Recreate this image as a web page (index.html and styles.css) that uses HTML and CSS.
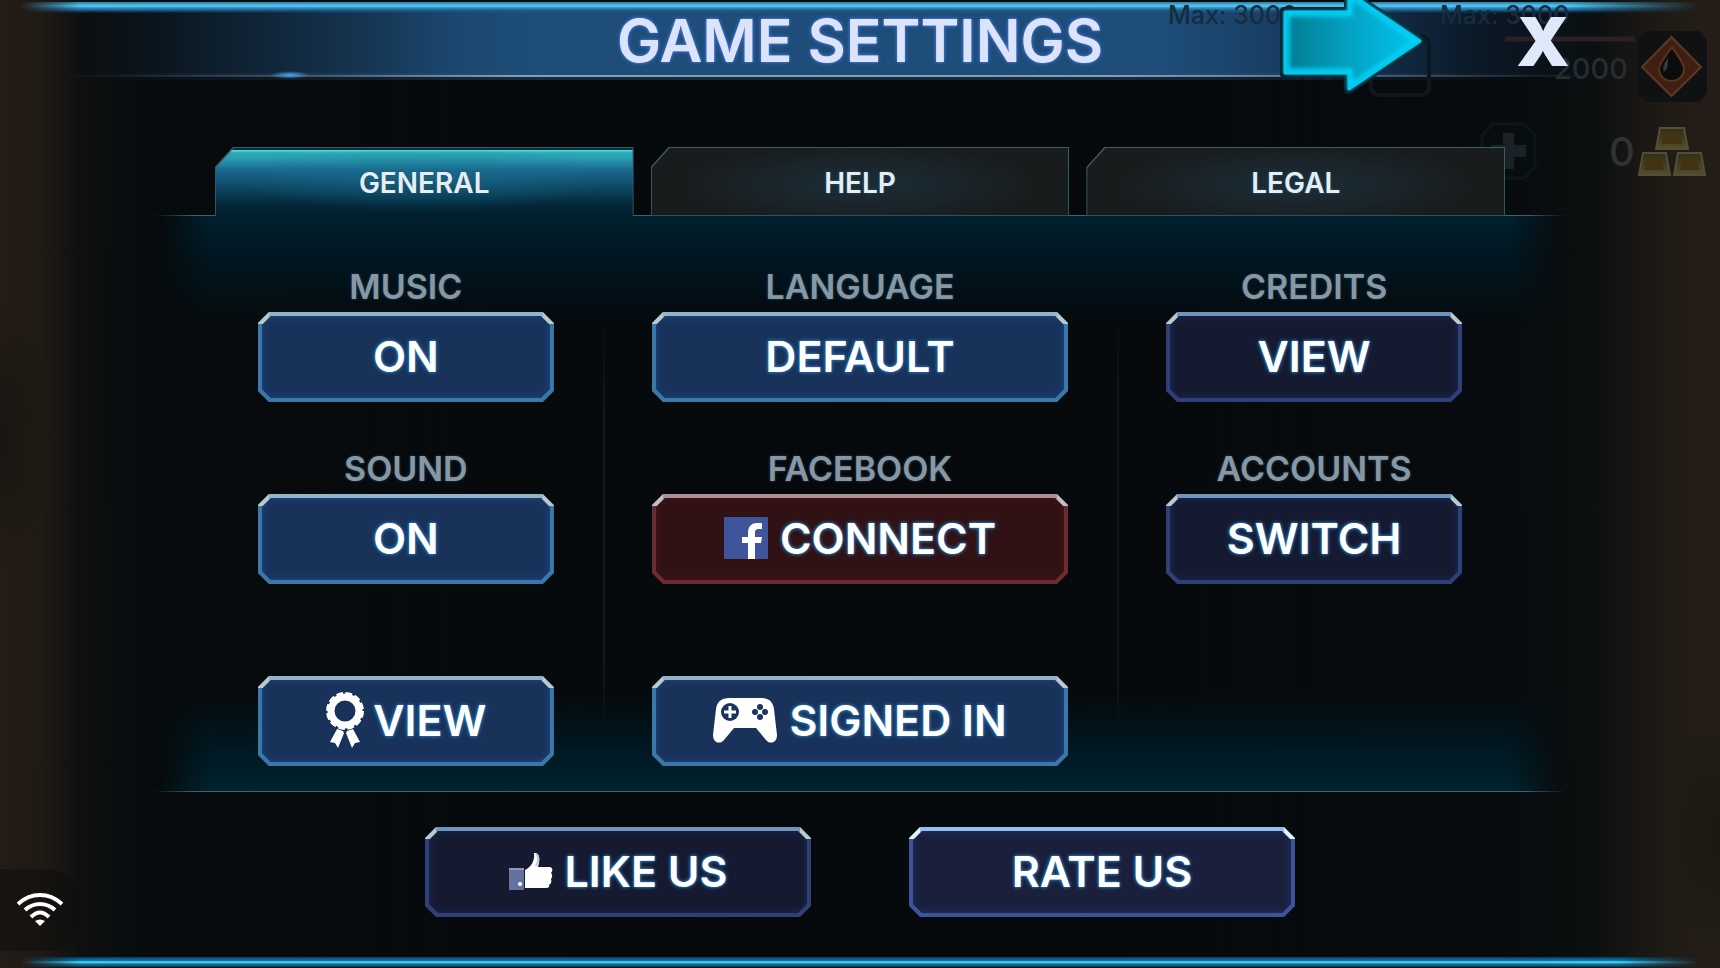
FILE: index.html
```html
<!DOCTYPE html>
<html lang="en">
<head>
  <meta charset="UTF-8" />
  <meta name="viewport" content="width=device-width, initial-scale=1.0"/>
  <title>Game Settings</title>
  <link rel="stylesheet" href="styles.css">
</head>
<body>

<!-- dimmed resource display behind the dialog -->
<svg class="hud" width="560" height="190" viewBox="0 0 560 190" aria-hidden="true">
  <defs>
    <linearGradient id="gold" x1="0" y1="0" x2="0" y2="1">
      <stop offset="0" stop-color="#322c16"/>
      <stop offset="1" stop-color="#564d2c"/>
    </linearGradient>
  </defs>
  <g fill="#172c3e" font-size="25" font-weight="500">
    <text x="8" y="24">Max: 3000</text>
    <text x="280" y="24">Max: 3000</text>
  </g>
  <path d="M345 39H475" stroke="#2b2027" stroke-width="5"/>
  <g fill="#252d34" font-size="29" font-weight="500">
    <text x="128" y="79">100</text>
    <text x="394" y="79">2000</text>
  </g>
  <rect x="211" y="36" width="58" height="59" rx="8" fill="none" stroke="#0c181e" stroke-width="4"/>
  <path d="M487 31H539L547 40V93L539 102H487L478 93V40Z" fill="#0f1113"/>
  <path d="M511.500 37L541 67L511.500 96L482 67Z" fill="#401e12" stroke="#5a3b1e" stroke-width="2"/>
  <path d="M512 47C518 56 524 63 524 69A12.500 12 0 0 1 499 69C499 63 506 56 512 47Z" fill="#0b0c0e" stroke="#54361c" stroke-width="2"/>
  <path d="M508 58C504 63 502 68 504 72C508 69 508 64 508 58Z" fill="#33393c"/>
  <path d="M333 124H364L375 135V167L364 178H333L322 167V135Z" fill="#080d0f" stroke="#0b1618" stroke-width="3"/>
  <path d="M343 133H354V145H366V157H354V169H343V157H331V145H343Z" fill="#1b2125"/>
  <text x="449" y="166" font-size="40" font-weight="500" fill="#303334">0</text>
  <g fill="url(#gold)" stroke="#514e3c" stroke-width="2">
    <path d="M500 128H524L528 149H496Z"/>
    <path d="M483 153H506L510 175H479Z"/>
    <path d="M518 153H541L545 175H514Z"/>
  </g>
  <g fill="#403412">
    <path d="M504 133H520L522 144H502Z"/>
    <path d="M486 158H502L504 170H484Z"/>
    <path d="M522 158H537L539 170H520Z"/>
  </g>
</svg>

<div class="dialog">
  <header class="header">
    <h1>GAME SETTINGS</h1>
    <svg class="arrow" width="146" height="100" viewBox="0 0 146 100" aria-hidden="true">
      <defs>
        <linearGradient id="arrowFill">
          <stop offset="0" stop-color="#027c92"/>
          <stop offset="0.500" stop-color="#04a3c4"/>
          <stop offset="1" stop-color="#02c5ee"/>
        </linearGradient>
        <filter id="soft"><feGaussianBlur stdDeviation="2"/></filter>
      </defs>
      <path d="M4 15H68V-4L142 45L68 94V78H4Z" fill="#04202d" stroke="#04202d" stroke-width="8" stroke-linejoin="round"/>
      <path d="M5 16H69V-3L140 45L69 93V77H5Z" fill="url(#arrowFill)"/>
      <path d="M7 18H70V-1L137 45L70 90V75H7Z" fill="none" stroke="#05d6fb" stroke-width="5" filter="url(#soft)"/>
      <path d="M5 16H69V-3L140 45L69 93V77H5Z" fill="none" stroke="#06c9f0" stroke-width="3" stroke-linejoin="round"/>
    </svg>
    <button class="close" aria-label="Close">X</button>
  </header>

  <main class="content">
    <nav class="tabs">
      <button class="tab active">GENERAL</button>
      <button class="tab">HELP</button>
      <button class="tab">LEGAL</button>
    </nav>

    <section class="panel">
      <div class="column">
        <div class="setting">
          <label for="music">MUSIC</label>
          <button class="btn" id="music">ON</button>
        </div>
        <div class="setting">
          <label for="sound">SOUND</label>
          <button class="btn" id="sound">ON</button>
        </div>
        <div class="setting">
          <button class="btn">
            <svg width="40" height="58" viewBox="0 0 40 58" aria-hidden="true">
              <circle cx="20" cy="20" r="14" fill="none" stroke="#fff" stroke-width="7"/>
              <circle cx="20" cy="20" r="17" fill="none" stroke="#fff" stroke-width="4" stroke-dasharray="6.400 2.500"/>
              <path d="M12 38L18 40L19 42L13 57L10 52L5 51ZM28 38L22 40L21 42L27 57L30 52L35 51Z" fill="#fff"/>
            </svg>
            VIEW
          </button>
        </div>
      </div>

      <div class="column">
        <div class="setting">
          <label for="language">LANGUAGE</label>
          <button class="btn" id="language">DEFAULT</button>
        </div>
        <div class="setting">
          <label for="facebook">FACEBOOK</label>
          <button class="btn red wide-gap" id="facebook">
            <svg width="44" height="42" viewBox="0 0 44 42" aria-hidden="true">
              <rect width="44" height="42" rx="1" fill="#3f559b"/>
              <path d="M24 42V26H18V20H24V16C24 9 28 6 33 6H38V12H35C32 12 31 13 31 16V20H38L37 26H31V42Z" fill="#fff"/>
            </svg>
            CONNECT
          </button>
        </div>
        <div class="setting">
          <button class="btn wide-gap">
            <svg width="64" height="46" viewBox="0 0 64 46" aria-hidden="true">
              <path d="M16 1H48C56 1 60 5 61 12L64 38C64 47 56 47 53 43L43 31H21L11 43C8 47 0 47 0 38L3 12C4 5 8 1 16 1Z" fill="#fff"/>
              <circle cx="17" cy="15" r="9" fill="#1a3560"/>
              <path d="M17 9V21M11 15H23" stroke="#fff" stroke-width="3"/>
              <g fill="#1a3560">
                <circle cx="47" cy="10" r="3"/>
                <circle cx="47" cy="20" r="3"/>
                <circle cx="42" cy="15" r="3"/>
                <circle cx="52" cy="15" r="3"/>
              </g>
            </svg>
            SIGNED IN
          </button>
        </div>
      </div>

      <div class="column">
        <div class="setting">
          <label for="credits">CREDITS</label>
          <button class="btn dark" id="credits">VIEW</button>
        </div>
        <div class="setting">
          <label for="accounts">ACCOUNTS</label>
          <button class="btn dark" id="accounts">SWITCH</button>
        </div>
      </div>
    </section>

    <div class="links">
      <button class="btn dark wide-gap">
        <svg width="44" height="38" viewBox="0 0 44 38" aria-hidden="true">
          <path d="M0 16H15V38H0Z" fill="#65719f"/>
          <path d="M0 16H15V18H0Z" fill="#8e99c0"/>
          <circle cx="11" cy="32" r="2" fill="#fff"/>
          <path d="M16 18C22 15 26 9 25 1C30 0 32 6 29 15H41C44 16 44 19 42 21C44 23 43 26 42 27C43 30 42 32 40 33C41 35 39 36 37 36H16Z" fill="#fff"/>
          <path d="M27 2C30 4 30 9 27 14" fill="none" stroke="#bdcbe0" stroke-width="2"/>
        </svg>
        LIKE US
      </button>
      <button class="btn dark bright">RATE US</button>
    </div>
  </main>
</div>

<div class="wifi">
  <svg width="46" height="36" viewBox="0 0 46 36" fill="none" stroke="#fff" stroke-width="4" role="img" aria-label="Wi-Fi">
    <path d="M1 12C14 0 32 0 45 12M8 18C17 10 29 10 38 18M14 25C20 19 26 19 32 25"/>
    <path d="M18 29Q23 26 28 29L23 34Z" fill="#fff" stroke="none"/>
  </svg>
</div>

</body>
</html>
```
FILE: styles.css
```css
* {
  margin: 0;
  padding: 0;
  box-sizing: border-box;
  font-family: Inter, "Liberation Sans", sans-serif;
}
body {
  min-height: 100vh;
  position: relative;
  overflow-x: hidden;
  background:
    radial-gradient(ellipse 50px 140px at 0 45%, rgba(20,18,14,0.7), transparent),
    radial-gradient(ellipse 60px 120px at 100% 86%, rgba(24,24,12,0.8), transparent),
    linear-gradient(90deg, #241c16, #201a14 40px, #0d0f10 84px, #070b0d 160px, #05090c 50%, #070b0d 1500px, #0b0f10 calc(100% - 130px), #211b16 calc(100% - 50px), #241d18 100%);
}
button {
  border: none;
  background: none;
  cursor: pointer;
}

.hud {
  position: absolute;
  top: 0;
  right: 0;
}

.dialog {
  min-height: 100vh;
  position: relative;
  display: flex;
  flex-direction: column;
}
/* glowing line along the bottom edge */
.dialog::after {
  content: "";
  height: 10px;
  margin: auto 20px 1px;
  background: linear-gradient(#073b58, #0a79a8 35%, #5fe3fb 50%, #0a79a8 70%, #073b58);
  -webkit-mask-image: linear-gradient(90deg, transparent, #000 60px, #000 calc(100% - 80px), transparent);
  mask-image: linear-gradient(90deg, transparent, #000 60px, #000 calc(100% - 80px), transparent);
}

/* header */
.header {
  position: relative;
  height: 79px;
  padding: 2px 150px 0;
  display: grid;
  grid-template-columns: 1fr auto 1fr;
  align-items: center;
}
.header::before {
  content: "";
  position: absolute;
  inset: 2px 20px -2px;
  z-index: -1;
  background:
    radial-gradient(ellipse 20px 4px at 270px 73px, #4aa8e8, transparent),
    linear-gradient(#1b7fb0 0, #64c8ea 4px, #2a8fc0 6px, #1d5f92 8px, transparent 11px) top / 100% 11px no-repeat,
    linear-gradient(90deg, transparent 40px, rgba(127,159,192,0.4) 300px, #7f9fc0 500px, #7f9fc0 65%, rgba(127,159,192,0.2) 88%, transparent 94%) 0 73px / 100% 2px no-repeat,
    linear-gradient(90deg, transparent 60px, rgba(50,75,105,0.5) 500px, rgba(50,75,105,0.5) 65%, transparent 90%) 0 71px / 100% 7px no-repeat,
    linear-gradient(90deg, transparent 60px, rgba(16,40,60,0.5) 160px, #163450 340px, #1b4870 440px, #1d4d78 520px, #1d4d78 68%, #163758 78%, rgba(16,38,62,0.6) 86%, transparent 94%) 0 8px / 100% 66px no-repeat;
  -webkit-mask-image: linear-gradient(90deg, transparent, #000 60px, #000 calc(100% - 130px), transparent);
  mask-image: linear-gradient(90deg, transparent, #000 60px, #000 calc(100% - 130px), transparent);
}
.header h1 {
  grid-column: 2;
  color: #dce4fb;
  font-size: 59px;
  font-weight: 600;
  line-height: 76px;
  text-shadow: 0 0 4px #4a78e0, 0 0 2px #4a78e0;
}
.arrow {
  position: absolute;
  top: -4px;
  right: 294px;
}
.close {
  justify-self: end;
  width: 54px;
  color: #dfe9fa;
  font-size: 68px;
  font-weight: 900;
  line-height: 74px;
}

/* tabs */
.content {
  width: 82%;
  margin: 68px auto 0;
}
.tabs {
  position: relative;
  z-index: 1;
  margin: 0 60px -1px;
  display: grid;
  grid-template-columns: repeat(3, 1fr);
  gap: 17px;
}
.tab {
  --cut: polygon(18px 0, 100% 0, 100% 100%, 0 100%, 0 20px);
  position: relative;
  height: 69px;
  padding-top: 3px;
  background: linear-gradient(#3c5d66, #2a5460);
  clip-path: var(--cut);
  color: #e3eff5;
  font-size: 28px;
  font-weight: 600;
  text-shadow: 0 0 3px #2d5364;
  z-index: 0;
}
.tab::before {
  content: "";
  position: absolute;
  inset: 1px;
  z-index: -1;
  clip-path: var(--cut);
  background: radial-gradient(ellipse 42% 60% at 50% 55%, #1a2d38, #1a2429 60%, #191c1d);
}
.tab.active::before {
  inset: 1px 1px 0;
  background:
    radial-gradient(ellipse 45% 50% at 50% 45%, rgba(24,115,145,0.45), transparent),
    linear-gradient(#072a36 2px, #4ee8e4 2px, #2aa8b8 5px, #2a9fb0 10px, #1a6890 22px, #0e4a68 38px, #03283a 56px, #001e2b);
}

/* settings panel */
.panel {
  position: relative;
  padding: 52px 54px 25px;
  display: grid;
  grid-template-columns: 394fr 514fr 394fr;
  border: solid;
  border-width: 1px 0;
  border-image: linear-gradient(90deg, transparent, #3a6570 40px, #3a6570 calc(100% - 40px), transparent) 1;
}
.panel::before {
  content: "";
  position: absolute;
  inset: 0 5px;
  z-index: -1;
  background: linear-gradient(#00202d, #001722 40px, transparent 110px, transparent calc(100% - 100px), #001721 calc(100% - 45px), #00232e);
  -webkit-mask-image: linear-gradient(90deg, transparent, #000 50px, #000 calc(100% - 50px), transparent);
  mask-image: linear-gradient(90deg, transparent, #000 50px, #000 calc(100% - 50px), transparent);
}
.column {
  padding: 0 49px;
  display: flex;
  flex-direction: column;
  gap: 48px;
}
.column + .column {
  background: linear-gradient(transparent 50px, #11171b 140px, #11171b 400px, transparent 470px) left / 2px 100% no-repeat;
}
.setting {
  height: 134px;
  display: flex;
  flex-direction: column;
  justify-content: flex-end;
}
.setting label {
  height: 44px;
  color: #8698a5;
  font-size: 34px;
  font-weight: 600;
  line-height: 38px;
  text-align: center;
  text-shadow: 0 0 3px #2b4352;
}

/* buttons with cut corners */
.btn {
  --corner: #b9cacf;
  --top: #94b4c5;
  --edge: #3b78aa;
  --glow: #1c4a8a;
  --fill: #19325a;
  position: relative;
  z-index: 0;
  width: 100%;
  height: 90px;
  padding-bottom: 2px;
  display: flex;
  align-items: center;
  justify-content: center;
  gap: 8px;
  clip-path: polygon(11px 0, calc(100% - 11px) 0, 100% 11px, 100% calc(100% - 11px), calc(100% - 11px) 100%, 11px 100%, 0 calc(100% - 11px), 0 11px);
  background:
    linear-gradient(var(--top), var(--top)) 50% 0 / calc(100% - 22px) 5px no-repeat,
    linear-gradient(var(--corner) 12px, var(--edge) 12px);
  color: #fff;
  font-size: 43px;
  font-weight: 600;
  text-shadow: 0 0 4px #2878b8, 0 0 3px #2878b8;
}
.btn::before {
  content: "";
  position: absolute;
  inset: 4px;
  z-index: -1;
  clip-path: polygon(9px 0, calc(100% - 9px) 0, 100% 9px, 100% calc(100% - 9px), calc(100% - 9px) 100%, 9px 100%, 0 calc(100% - 9px), 0 9px);
  background: var(--fill);
  box-shadow: inset 0 0 8px var(--glow);
}
.btn.red {
  --corner: #c3c0c2;
  --top: #ac9096;
  --edge: #6a2c31;
  --glow: #4a171b;
  --fill: #301215;
}
.btn.dark {
  --top: #7095bd;
  --edge: #2f4078;
  --glow: #1b2d60;
  --fill: #151a30;
}
.btn.bright {
  --corner: #dff4fb;
  --top: #92bff0;
  --edge: #3d549c;
  --glow: #22366e;
  --fill: #1a1f3b;
}
.btn.wide-gap {
  gap: 12px;
}

.links {
  margin: 35px 0 36px;
  display: flex;
  justify-content: center;
  gap: 98px;
}
.links .btn {
  width: 386px;
}

.wifi {
  position: absolute;
  left: 0;
  bottom: 17px;
  width: 79px;
  height: 82px;
  padding-left: 17px;
  display: flex;
  align-items: center;
  border-radius: 0 32px 32px 0;
  background: rgba(12,12,11,0.5);
}

@media (max-width: 1300px) {
  .content {
    width: 96%;
  }
  .column {
    padding: 0 16px;
  }
  .btn {
    font-size: 32px;
  }
  .header {
    padding: 2px 20px 0;
  }
  .header h1 {
    font-size: 40px;
  }
  .arrow {
    display: none;
  }
}
```
